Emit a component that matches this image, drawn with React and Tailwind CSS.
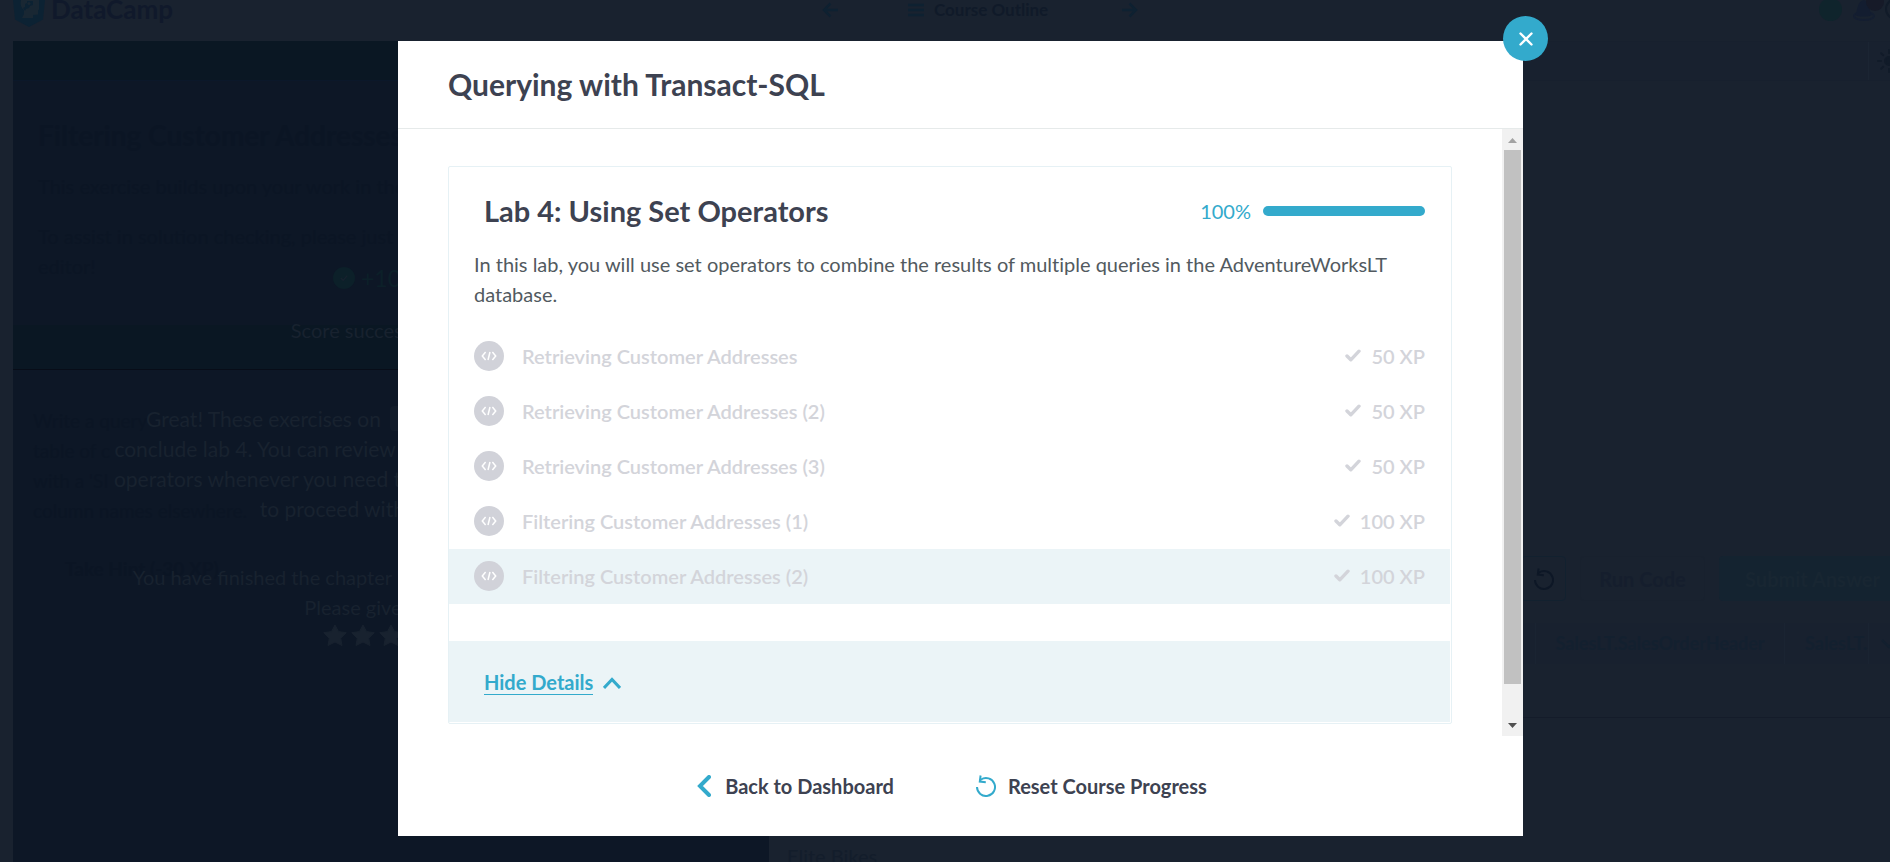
function CodeIcon() {
  return (
    <svg viewBox="0 0 16 10" className="h-[10px] w-4" fill="none" stroke="currentColor" strokeWidth="1.5">
      <path d="M4.6 1 1.3 5l3.3 4M11.4 1l3.3 4-3.3 4M9 1 7 9" />
    </svg>
  );
}

function Check() {
  return (
    <svg viewBox="0 0 16 13" className="h-[13px] w-4" fill="none" stroke="currentColor" strokeWidth="3.4" strokeLinecap="round" strokeLinejoin="round">
      <path d="M2 7l3.8 3.8L14 2.2" />
    </svg>
  );
}

function ResetIcon({ className }) {
  return (
    <svg viewBox="0 0 20 22" className={className} fill="none" stroke="currentColor" strokeWidth="2">
      <path d="M1 12a9 9 0 1 0 4-7.500L4 5.600" />
      <path d="M4.600 0.500 3.800 6.600l6 .7" />
    </svg>
  );
}

const exercises = [
  { title: 'Retrieving Customer Addresses', xp: 50 },
  { title: 'Retrieving Customer Addresses (2)', xp: 50 },
  { title: 'Retrieving Customer Addresses (3)', xp: 50 },
  { title: 'Filtering Customer Addresses (1)', xp: 100 },
  { title: 'Filtering Customer Addresses (2)', xp: 100, active: true },
];

function Star() {
  return (
    <svg viewBox="0 0 24 22" className="h-[22px] w-6" fill="currentColor" stroke="currentColor" strokeLinejoin="round">
      <path d="M12 .8l3.500 6.800 7.800 1.100-5.600 5.500 1.300 7.300L12 18l-7 3.500 1.300-7.300L.7 8.700l7.800-1.100z" />
    </svg>
  );
}

function Arrow() {
  return (
    <svg viewBox="0 0 16 16" className="h-4 w-4" fill="none" stroke="currentColor" strokeWidth="2.5">
      <path d="M16 8H2M8.500 1.500 2 8l6.500 6.500" />
    </svg>
  );
}

function TopBar() {
  return (
    <header className="flex h-[41px] shrink-0 items-start justify-between overflow-hidden">
      <div className="flex w-[770px] items-start pl-[13px]">
        <svg viewBox="0 0 32 28" className="h-7 w-8">
          <path d="M0 0h32l-2 19.500L16 27 2 19.500z" fill="#0c2233" />
          <path d="M8 0C7 4 8 8 11 10v4l-2 4h11v-3l5-.5v-4l1-1V0z" fill="#192733" />
          <path d="M10 8l2-1V4l2-1V1h6v4l-3 1-1 2-3 1-1 2z" fill="#0c2233" />
          <circle cx="16" cy="3.500" r="1.500" fill="#192733" />
        </svg>
        <span className="-mt-[3px] ml-[6px] text-[26px] leading-6 font-bold text-[#10192b]">DataCamp</span>
      </div>
      <nav className="flex h-5 flex-1 items-center text-[#0e2131]">
        <a href="#previous" aria-label="Previous" className="ml-[52px]">
          <Arrow />
        </a>
        <a href="#outline" className="ml-[70px] flex items-center gap-[10px] text-[17px] font-bold">
          <svg viewBox="0 0 16 14" className="h-[14px] w-4" stroke="currentColor" strokeWidth="2.5">
            <path d="M0 2h16M0 7h16M0 12h16" />
          </svg>
          <span className="text-[#101a29]">Course Outline</span>
        </a>
        <a href="#next" aria-label="Next" className="ml-[74px] rotate-180">
          <Arrow />
        </a>
      </nav>
      <div className="flex">
        <span className="-mt-[2px] h-[23px] w-[23px] rounded-full bg-[#0f242c]" />
        <svg viewBox="0 0 40 24" className="ml-2 h-6 w-10">
          <ellipse cx="14" cy="16" rx="10" ry="4" fill="none" stroke="#141e31" strokeWidth="2" />
          <path d="M5 15c3-3 1-13 9-15 6 2 5 12 8 15-4 2-13 2-17 0z" fill="#131d30" />
          <circle cx="25" cy="2" r="9" fill="#161a28" />
          <circle cx="46" cy="9" r="10" fill="none" stroke="#111b29" strokeWidth="2" />
        </svg>
      </div>
    </header>
  );
}

function ExercisePanel() {
  return (
    <section className="relative w-[756px] shrink-0 bg-[#0d1726] text-[#0b1524]">
      <div className="h-[39px] bg-[#0a1723]" />
      <div className="h-[245px] border-t border-[#0b182a] px-[25px] pt-[34px]">
        <h2 className="text-[28px] leading-10 font-bold">Filtering Customer Addresses (2)</h2>
        <p className="mt-4 text-[20px] leading-[30px]">This exercise builds upon your work in the previous exercise.</p>
        <p className="mt-5 text-[20px] leading-[30px]">
          To assist in solution checking, please just write one query in the
          <br />
          editor!
        </p>
      </div>
      <div className="h-[44px] bg-[#0a1723]" />
      <div className="border-t border-[#080d18] px-5 pt-9 text-[19px] leading-[30px]">
        <p>
          Write a query
          <br />
          table of c
          <br />
          with a &apos;SI
          <br />
          column names elsewhere.
        </p>
        <p className="mt-7 pl-8 font-bold">Take Hint (-30 XP)</p>
      </div>
      <div className="absolute inset-x-0 top-[222px] text-center text-[20px] leading-[30px] text-[#18222f]">
        <p className="flex items-center justify-center gap-[6px] pb-[22px] text-[23px] text-[#0c2029]">
          <span className="flex h-[22px] w-[22px] items-center justify-center rounded-full bg-[#0c2029] text-[#18222f]">
            <svg viewBox="0 0 10 10" className="h-2 w-2" fill="none" stroke="currentColor" strokeWidth="1.5">
              <path d="M1 5l3 3 5-6" />
            </svg>
          </span>
          +100 XP
        </p>
        <p>Score successfully sent</p>
        <p className="mt-[59px] text-[21px]">
          Great! These exercises on{' '}
          <code className="ml-1 rounded bg-[#121c2a] px-2 font-['Lato',sans-serif] leading-none">EXCEPT and INTERSECT</code>
          <br />
          conclude lab 4. You can review the exercises about these set
          <br />
          operators whenever you need to, or you can begin right now
          <br />
          to proceed with the new lab.
        </p>
        <p className="mt-[38px]">
          You have finished the chapter &quot;Lab 4: Using Set Operators&quot;.
          <br />
          Please give a rating:
        </p>
        <div className="mt-[2px] flex justify-center gap-[4px]">
          <Star /><Star /><Star /><Star /><Star />
        </div>
      </div>
    </section>
  );
}

function EditorPanel() {
  return (
    <section className="min-w-0 flex-1 overflow-hidden text-[#131d2b]">
      <div className="flex h-[40px] justify-end border-y border-[#17202e] bg-[#18212f]">
        <div className="flex w-[22px] items-center overflow-hidden border-l border-[#1b2533] pl-2 text-[#111b29]">
          <svg viewBox="0 0 24 24" className="h-6 w-6 shrink-0" stroke="currentColor" strokeWidth="2" strokeLinecap="round">
            <circle cx="12" cy="12" r="4" fill="currentColor" />
            <path d="M12 1v3M12 20v3M1 12h3M20 12h3M4.200 4.200l2 2M4.200 19.800l2-2" />
          </svg>
        </div>
      </div>
      <div className="flex h-[542px] items-end justify-end gap-[14px] pb-[22px]">
        <button className="flex h-[45px] w-[45px] shrink-0 items-center justify-center rounded border border-[#12212f] text-[#0d1726]">
          <ResetIcon className="h-[22px] w-5" />
        </button>
        <button className="h-[45px] w-[125px] shrink-0 rounded border border-[#18212e] text-[20px] font-bold text-[#151e2d]">Run Code</button>
        <button className="-mr-4 h-[45px] w-[187px] shrink-0 rounded bg-[#142330] text-[20px] font-bold text-[#182632]">
          Submit Answer
        </button>
      </div>
      <div className="flex h-[41px] items-stretch justify-end bg-[#18212f] text-[18px] font-bold text-[#13202f]">
        <span className="flex w-[249px] items-center justify-center border-l border-[#1a2432]">SalesLT.SalesOrderHeader</span>
        <span className="flex w-[84px] items-center overflow-hidden border-l border-[#1a2432] pl-5">SalesLT.SalesOrderDetail</span>
        <span className="flex w-[22px] items-center overflow-hidden border-l border-[#1a2432] pl-3">
          <svg viewBox="0 0 16 10" className="h-[10px] w-4 shrink-0" fill="none" stroke="currentColor" strokeWidth="2.5">
            <path d="M1 1l7 7 7-7" />
          </svg>
        </span>
      </div>
      <div className="h-[54px] border-b border-[#141c2a]" />
      <p className="mt-[123px] pl-[18px] text-[20px] leading-[30px]">Elite Bikes</p>
    </section>
  );
}

function LabCard() {
  return (
    <article className="rounded-[2px] border border-[#e6f1f5] pr-px pb-px">
      <div className="flex items-center justify-between pt-[22px] pr-[25px] pl-[35px]">
        <h2 className="text-[29px] leading-[44px] font-bold text-[#3d4251]">Lab 4: Using Set Operators</h2>
        <div className="flex items-center gap-3">
          <label htmlFor="lab-progress" className="text-[20px] leading-6 text-[#33aacc]">100%</label>
          <progress
            id="lab-progress"
            value="100"
            max="100"
            className="h-[10px] w-[162px] appearance-none overflow-hidden rounded-full bg-[#33aacc] [&::-webkit-progress-bar]:bg-[#33aacc] [&::-webkit-progress-value]:bg-[#33aacc]"
          />
        </div>
      </div>
      <p className="mt-4 px-[25px] text-[20px] leading-[30px] text-[#525a60]">
        In this lab, you will use set operators to combine the results of multiple queries in the AdventureWorksLT database.
      </p>
      <ul className="mt-5">
        {exercises.map((e) => (
          <li key={e.title} className={e.active ? 'bg-[#ebf4f7]' : ''}>
            <a href="#exercise" className="flex h-[55px] items-center px-[25px] pb-[2px] text-[20px] leading-6 font-semibold text-[#d3d4da]">
              <span className="mr-[18px] flex h-[30px] w-[30px] items-center justify-center rounded-full bg-[#d1d2d9] text-white">
                <CodeIcon />
              </span>
              <span className="flex-1">{e.title}</span>
              <Check />
              <span className="ml-[10px]">{e.xp} XP</span>
            </a>
          </li>
        ))}
      </ul>
      <div className="mt-[37px] flex h-[81px] items-center bg-[#ebf4f7] pt-[2px] pl-[35px] text-[#33aacc]">
        <button className="flex items-center gap-[10px] text-[20px] leading-6 font-bold">
          <span className="border-b border-[#33aacc]">Hide Details</span>
          <svg viewBox="0 0 18 12" className="h-3 w-[18px]" fill="none" stroke="currentColor" strokeWidth="3">
            <path d="M1 11l8-8.500 8 8.500" />
          </svg>
        </button>
      </div>
    </article>
  );
}

function Scrollbar() {
  return (
    <div aria-hidden="true" className="flex w-[21px] shrink-0 flex-col items-center bg-[#f1f1f1]">
      <svg viewBox="0 0 21 21" className="h-[21px] w-[21px]">
        <path d="M6 14h9l-4.500-5z" fill="#a3a3a3" />
      </svg>
      <div className="h-[534px] w-[17px] bg-[#c1c1c1]" />
      <svg viewBox="0 0 21 21" className="mt-auto h-[21px] w-[21px]">
        <path d="M6 8h9l-4.500 5z" fill="#505050" />
      </svg>
    </div>
  );
}

export default function App() {
  return (
    <div className="relative h-screen overflow-hidden bg-[#19222f] font-['Lato',sans-serif]">
      <div className="flex h-full flex-col">
        <TopBar />
        <main className="flex min-h-0 flex-1 pl-[13px]">
          <ExercisePanel />
          <EditorPanel />
        </main>
      </div>
      <div className="absolute inset-0 flex items-start justify-center pt-[41px] pl-[31px] [font-variant-ligatures:none]">
        <div role="dialog" aria-labelledby="dialog-title" className="relative w-full max-w-[1125px] bg-white">
          <h1 id="dialog-title" className="border-b border-[#e6eaea] px-[50px] pt-[21px] pb-[22px] text-[30px] leading-[44px] font-bold text-[#3d4251]">
            Querying with Transact-SQL
          </h1>
          <div className="flex h-[607px]">
            <div className="min-w-0 flex-1 overflow-y-auto px-[50px] py-[37px] [scrollbar-width:none]">
              <LabCard />
            </div>
            <Scrollbar />
          </div>
          <footer className="flex h-[100px] items-center justify-center gap-[82px] pr-[17px] text-[20px] leading-6 font-bold text-[#3d4251]">
            <a href="#dashboard" className="flex items-center gap-[14px]">
              <svg viewBox="0 0 14 22" className="h-[22px] w-[14px] text-[#33aacc]" fill="none" stroke="currentColor" strokeWidth="4" strokeLinecap="round">
                <path d="M12 2 3 11l9 9" />
              </svg>
              Back to Dashboard
            </a>
            <button className="flex items-center gap-3">
              <ResetIcon className="h-[22px] w-5 text-[#33aacc]" />
              Reset Course Progress
            </button>
          </footer>
          <button
            aria-label="Close"
            className="absolute -top-[25px] -right-[25px] flex h-[45px] w-[45px] items-center justify-center rounded-full bg-[#33aacc] text-white"
          >
            <svg viewBox="0 0 14 14" className="h-[14px] w-[14px]" fill="none" stroke="currentColor" strokeWidth="2.4" strokeLinecap="round">
              <path d="M1.500 1.500l11 11M12.500 1.500l-11 11" />
            </svg>
          </button>
        </div>
      </div>
    </div>
  );
}
